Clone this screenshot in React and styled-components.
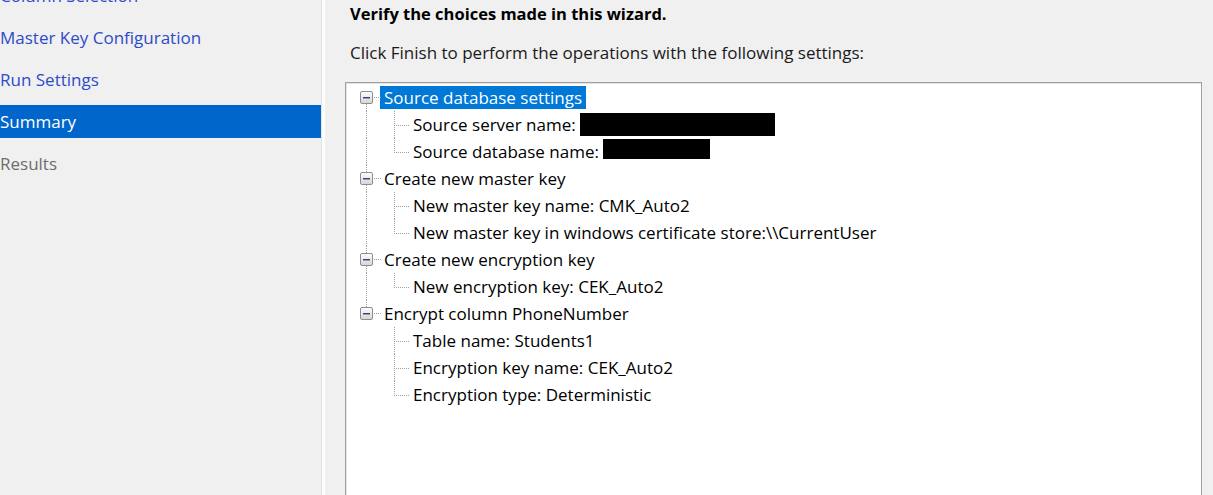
import React from 'react'
import styled, { createGlobalStyle, css } from 'styled-components'

const GlobalStyle = createGlobalStyle`
    html, body {
        margin: 0;
        padding: 0;
        background: #f0f0f0;
        overflow: hidden;
    }
    body {
        font-family: "Open Sans", "Noto Sans", sans-serif;
        font-size: 17px;
        color: #000;
    }
`

const steps = [
    { label: 'Column Selection' },
    { label: 'Master Key Configuration' },
    { label: 'Run Settings' },
    { label: 'Summary', active: true },
    { label: 'Results', disabled: true },
]

const tree = [
    {
        label: 'Source database settings',
        selected: true,
        children: [
            { label: 'Source server name:', redact: { w: 195, h: 23, shift: 0 } },
            { label: 'Source database name:', redact: { w: 107, h: 20, shift: -3 } },
        ],
    },
    {
        label: 'Create new master key',
        children: [
            { label: 'New master key name: CMK_Auto2' },
            { label: 'New master key in windows certificate store:\\\\CurrentUser' },
        ],
    },
    {
        label: 'Create new encryption key',
        children: [{ label: 'New encryption key: CEK_Auto2' }],
    },
    {
        label: 'Encrypt column PhoneNumber',
        children: [
            { label: 'Table name: Students1' },
            { label: 'Encryption key name: CEK_Auto2' },
            { label: 'Encryption type: Deterministic' },
        ],
    },
]

const App = () => {
    return (
        <Page>
            <GlobalStyle />
            <Sidebar>
                <StepList>
                    {steps.map((s) => (
                        <Step key={s.label} $active={s.active} $disabled={s.disabled}>
                            {s.label}
                        </Step>
                    ))}
                </StepList>
            </Sidebar>
            <Divider />
            <Main>
                <Heading>Verify the choices made in this wizard.</Heading>
                <Intro>Click Finish to perform the operations with the following settings:</Intro>
                <TreeBox>
                    <Tree>
                        {tree.map((branch, i) => (
                            <Branch key={branch.label}>
                                <Row>
                                    <RootGutter $first={i === 0} $last={i === tree.length - 1}>
                                        <Expander />
                                    </RootGutter>
                                    <Label $selected={branch.selected}>{branch.label}</Label>
                                </Row>
                                {branch.children.map((child, j) => (
                                    <Row key={child.label}>
                                        <TrunkGutter $show={i !== tree.length - 1} />
                                        <LeafGutter $last={j === branch.children.length - 1} />
                                        <Label>
                                            {child.label}
                                            {child.redact && (
                                                <Redacted
                                                    style={{
                                                        width: child.redact.w,
                                                        height: child.redact.h,
                                                        top: child.redact.shift,
                                                    }}
                                                />
                                            )}
                                        </Label>
                                    </Row>
                                ))}
                            </Branch>
                        ))}
                    </Tree>
                </TreeBox>
            </Main>
        </Page>
    )
}

const dotV = css`
    background-image: linear-gradient(to bottom, #a0a0a0 50%, transparent 50%);
    background-size: 1px 2px;
    background-repeat: repeat-y;
`

const dotH = css`
    background-image: linear-gradient(to right, #a0a0a0 50%, transparent 50%);
    background-size: 2px 1px;
    background-repeat: repeat-x;
`

const Page = styled.div`
    display: flex;
    height: 495px;
    overflow: hidden;
`

const Sidebar = styled.nav`
    width: 321px;
    flex-shrink: 0;
`

const StepList = styled.ul`
    list-style: none;
    margin: -21px 0 0;
    padding: 0;
    display: flex;
    flex-direction: column;
    gap: 9px;
`

const Step = styled.li`
    height: 33px;
    display: flex;
    align-items: center;
    font-size: 17px;
    color: ${(p) => (p.$active ? '#fff' : p.$disabled ? '#6d6d6d' : '#2d4bc8')};
    background: ${(p) => (p.$active ? '#0066cc' : 'transparent')};
`

const Divider = styled.div`
    width: 3px;
    flex-shrink: 0;
    border-left: 1px solid #e3e3e3;
    background: #fcfcfc;
`

const Main = styled.main`
    flex: 1;
    padding: 0 11px 0 20px;
    display: flex;
    flex-direction: column;
`

const Heading = styled.h1`
    margin: 3px 0 0 5px;
    font-size: 16.5px;
    font-weight: 700;
    line-height: 22px;
    color: #000;
`

const Intro = styled.p`
    margin: 17px 0 0 5px;
    font-size: 17px;
    line-height: 22px;
    color: #1a1a1a;
`

const TreeBox = styled.div`
    margin-top: 18px;
    flex: 1;
    background: #fff;
    border: 1px solid #a0a0a0;
    border-bottom: none;
    box-shadow: inset 1px 1px 0 #e3e3e3;
    padding: 1px 0 0 1px;
`

const Tree = styled.ul`
    list-style: none;
    margin: 0;
    padding: 0;
`

const Branch = styled.li`
    display: flex;
    flex-direction: column;
`

const Row = styled.div`
    display: flex;
    align-items: center;
    height: 27px;
`

const RootGutter = styled.div`
    width: 33px;
    height: 100%;
    flex-shrink: 0;
    display: flex;
    align-items: center;
    padding-left: 13px;
    box-sizing: border-box;
    position: relative;

    &::before,
    &::after {
        content: '';
        position: absolute;
        left: 19px;
        width: 1px;
        ${dotV};
    }
    &::before {
        top: 0;
        height: 7px;
        display: ${(p) => (p.$first ? 'none' : 'block')};
    }
    &::after {
        bottom: 0;
        height: 7px;
        display: ${(p) => (p.$last ? 'none' : 'block')};
    }
`

const Expander = styled.span`
    position: relative;
    width: 11px;
    height: 11px;
    border: 1px solid #8e8e8e;
    border-radius: 2px;
    background: linear-gradient(#fdfdfd, #d6d6d6);
    box-sizing: content-box;

    &::before {
        content: '';
        position: absolute;
        left: 2px;
        top: 5px;
        width: 7px;
        height: 1px;
        background: #34467a;
        box-shadow: 0 1px 0 #8c98bc;
    }
    &::after {
        content: '';
        position: absolute;
        left: 13px;
        top: 5px;
        width: 7px;
        height: 1px;
        ${dotH};
    }
`

const TrunkGutter = styled.div`
    width: 33px;
    height: 100%;
    flex-shrink: 0;
    ${(p) => p.$show && dotV};
    background-position: 19px 0;
`

const LeafGutter = styled.div`
    position: relative;
    width: 29px;
    height: 100%;
    flex-shrink: 0;

    &::before {
        content: '';
        position: absolute;
        left: 14px;
        top: 0;
        width: 1px;
        height: ${(p) => (p.$last ? '15px' : '100%')};
        ${dotV};
    }
    &::after {
        content: '';
        position: absolute;
        left: 16px;
        top: 14px;
        width: 13px;
        height: 1px;
        ${dotH};
    }
`

const Label = styled.span`
    display: inline-flex;
    align-items: center;
    height: 23px;
    padding: 0 4px;
    white-space: nowrap;
    font-size: 17px;
    color: ${(p) => (p.$selected ? '#fff' : '#000')};
    background: ${(p) => (p.$selected ? '#0078d7' : 'transparent')};
`

const Redacted = styled.span`
    position: relative;
    display: inline-block;
    margin-left: 4px;
    background: #000;
`

export default App
